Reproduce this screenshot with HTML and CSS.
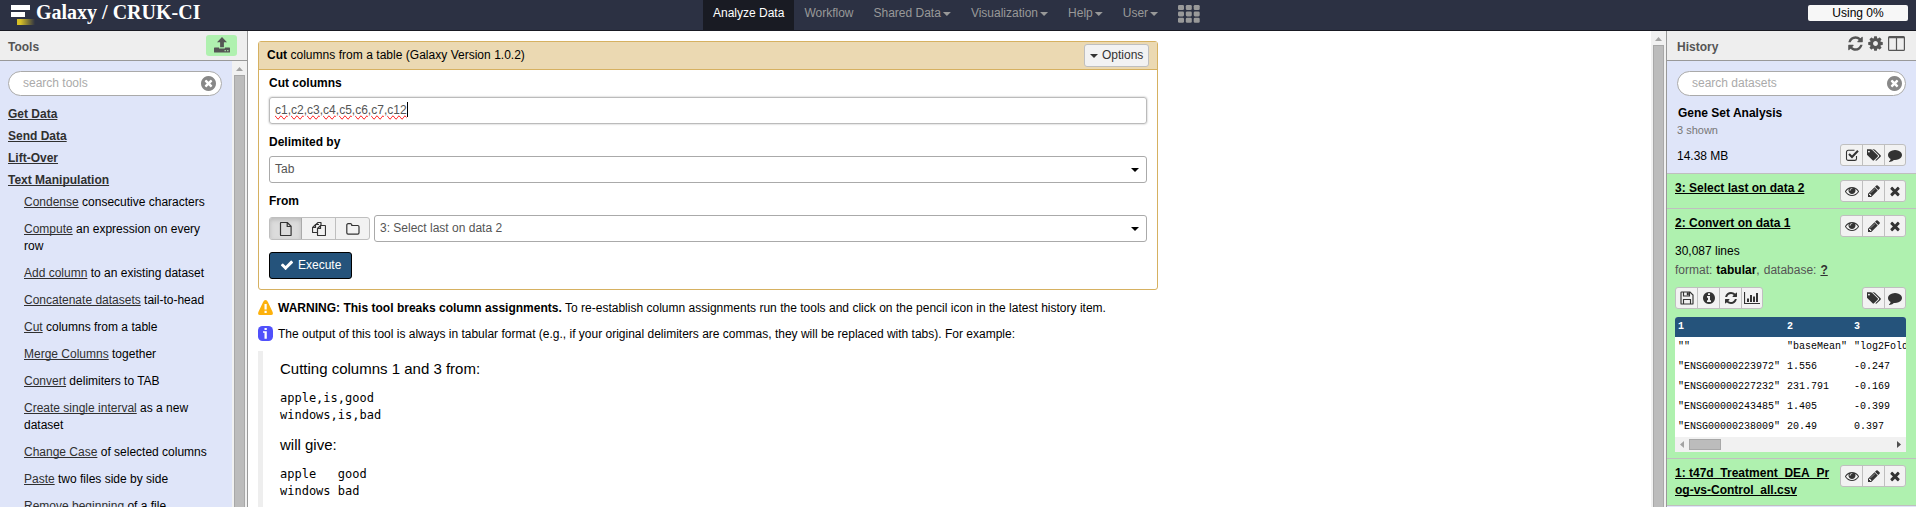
FILE: index.html
```html
<!DOCTYPE html>
<html lang="en">
<head>
<meta charset="utf-8">
<title>Galaxy / CRUK-CI</title>
<link rel="stylesheet" href="styles.css">
</head>
<body>
<svg class="sprite" aria-hidden="true">
  <symbol id="refresh" viewBox="0 0 1792 1792"><path d="M1639 1056q0 5-1 7-64 268-268 434.5t-478 166.5q-146 0-282.5-55t-243.5-157l-129 129q-19 19-45 19t-45-19-19-45v-448q0-26 19-45t45-19h448q26 0 45 19t19 45-19 45l-137 137q71 66 161 102t187 36q134 0 250-65t186-179q11-17 53-117 8-23 30-23h192q13 0 22.5 9.5t9.5 22.5zm25-800v448q0 26-19 45t-45 19h-448q-26 0-45-19t-19-45 19-45l138-138q-148-137-349-137-134 0-250 65t-186 179q-11 17-53 117-8 23-30 23h-199q-13 0-22.5-9.5t-9.5-22.5v-7q65-268 270-434.5t480-166.5q146 0 284 55.5t245 156.5l130-129q19-19 45-19t45 19 19 45z"/></symbol>
  <symbol id="cog" viewBox="0 0 1792 1792"><path d="M1152 896q0-106-75-181t-181-75-181 75-75 181 75 181 181 75 181-75 75-181zm512-109v222q0 12-8 23t-20 13l-185 28q-19 54-39 91 35 50 107 138 10 12 10 25t-9 23q-27 37-99 108t-94 71q-12 0-26-9l-138-108q-44 23-91 38-16 136-29 186-7 28-36 28h-222q-14 0-24.5-8.5t-11.5-21.5l-28-184q-49-16-90-37l-141 107q-10 9-25 9-14 0-25-11-126-114-165-168-7-10-7-23 0-12 8-23 15-21 51-66.5t54-70.5q-27-50-41-99l-183-27q-13-2-21-12.5t-8-23.5v-222q0-12 8-23t19-13l186-28q14-46 39-92-40-57-107-138-10-12-10-24 0-10 9-23 26-36 98.5-107.5t94.5-71.5q13 0 26 10l138 107q44-23 91-38 16-136 29-186 7-28 36-28h222q14 0 24.5 8.5t11.5 21.5l28 184q49 16 90 37l142-107q9-9 24-9 13 0 25 10 129 119 165 170 7 8 7 22 0 12-8 23-15 21-51 66.5t-54 70.5q26 50 41 98l183 28q13 2 21 12.5t8 23.5z"/></symbol>
  <symbol id="eye" viewBox="0 0 1792 1792"><path d="M1664 960q-152-236-381-353 61 104 61 225 0 185-131.5 316.5t-316.5 131.5-316.5-131.5-131.5-316.5q0-121 61-225-229 117-381 353 133 205 333.5 326.5t434.5 121.5 434.5-121.5 333.5-326.5zm-720-384q0-20-14-34t-34-14q-125 0-214.5 89.5t-89.5 214.5q0 20 14 34t34 14 34-14 14-34q0-86 61-147t147-61q20 0 34-14t14-34zm848 384q0 34-20 69-140 230-376.5 368.5t-499.5 138.5-499.5-139-376.5-368q-20-35-20-69t20-69q140-229 376.5-368t499.5-139 499.5 139 376.5 368q20 35 20 69z"/></symbol>
  <symbol id="pencil" viewBox="0 0 1792 1792"><path d="M491 1536l91-91-235-235-91 91v107h128v128h107zm523-928q0-22-22-22-10 0-17 7l-542 542q-7 7-7 17 0 22 22 22 10 0 17-7l542-542q7-7 7-17zm-54-192l416 416-832 832h-416v-416zm683 96q0 53-37 90l-166 166-416-416 166-165q36-38 90-38 53 0 91 38l235 234q37 39 37 91z"/></symbol>
  <symbol id="times" viewBox="0 0 1792 1792"><path d="M1490 1322q0 40-28 68l-136 136q-28 28-68 28t-68-28l-294-294-294 294q-28 28-68 28t-68-28l-136-136q-28-28-28-68t28-68l294-294-294-294q-28-28-28-68t28-68l136-136q28-28 68-28t68 28l294 294 294-294q28-28 68-28t68 28l136 136q28 28 28 68t-28 68l-294 294 294 294q28 28 28 68z"/></symbol>
  <symbol id="comment" viewBox="0 0 1792 1792"><path d="M1792 896q0 174-120 321.5t-326 233-450 85.5q-70 0-145-8-198 175-460 242-49 14-114 22-17 2-30.5-9t-17.5-29v-1q-3-4-.5-12t2-10 4.5-9.5l6-9 7-8.5 8-9q7-8 31-34.5t34.5-38 31-39.5 32.5-51 27-59 26-76q-157-89-247.5-220t-90.5-281q0-130 71-248.5t191-204.5 286-136.5 348-50.5q244 0 450 85.5t326 233 120 321.5z"/></symbol>
  <symbol id="tags" viewBox="0 0 1856 1792"><path d="M384 448q0-53-37.5-90.5t-90.5-37.5-90.5 37.5-37.5 90.5 37.5 90.5 90.5 37.5 90.5-37.5 37.5-90.5zm1067 576q0 53-37 90l-491 492q-39 37-91 37-53 0-90-37l-715-716q-38-37-64.5-101t-26.5-117v-416q0-52 38-90t90-38h416q53 0 117 26.5t102 64.5l715 714q37 39 37 91zm384 0q0 53-37 90l-491 492q-39 37-91 37-36 0-59-14t-53-45l470-470q37-37 37-90 0-52-37-91l-715-714q-38-38-102-64.5t-117-26.5h224q53 0 117 26.5t102 64.5l715 714q37 39 37 91z"/></symbol>
  <symbol id="checkbox" viewBox="0 0 14 14"><path fill="none" stroke="currentColor" stroke-width="1.100" d="M11.500 8v2.700a1.700 1.700 0 0 1-1.700 1.700H3.200a1.700 1.700 0 0 1-1.700-1.700V4a1.700 1.700 0 0 1 1.700-1.700H9.500"/><path fill="none" stroke="currentColor" stroke-width="2.100" d="M4 6l3 3 6-6.200"/></symbol>
  <symbol id="check" viewBox="0 0 1792 1792"><path d="M1671 566q0 40-28 68l-724 724-136 136q-28 28-68 28t-68-28l-136-136-362-362q-28-28-28-68t28-68l136-136q28-28 68-28t68 28l294 295 656-657q28-28 68-28t68 28l136 136q28 28 28 68z"/></symbol>
  <symbol id="clear" viewBox="128 128 1536 1536"><path d="M1277 1122q0-26-19-45l-181-181 181-181q19-19 19-45 0-27-19-46l-90-90q-19-19-46-19-26 0-45 19l-181 181-181-181q-19-19-45-19-27 0-46 19l-90 90q-19 19-19 46 0 26 19 45l181 181-181 181q-19 19-19 45 0 27 19 46l90 90q19 19 46 19 26 0 45-19l181-181 181 181q19 19 45 19 27 0 46-19l90-90q19-19 19-46zm387-226q0 209-103 385.5t-279.5 279.5-385.5 103-385.5-103-279.5-279.5-103-385.5 103-385.5 279.5-279.5 385.5-103 385.5 103 279.5 279.5 103 385.5z"/></symbol>
  <symbol id="info" viewBox="0 0 1792 1792"><path d="M1152 1376v-160q0-14-9-23t-23-9h-96v-512q0-14-9-23t-23-9h-320q-14 0-23 9t-9 23v160q0 14 9 23t23 9h96v320h-96q-14 0-23 9t-9 23v160q0 14 9 23t23 9h448q14 0 23-9t9-23zm-128-896v-160q0-14-9-23t-23-9h-192q-14 0-23 9t-9 23v160q0 14 9 23t23 9h192q14 0 23-9t9-23zm640 416q0 209-103 385.5t-279.5 279.5-385.5 103-385.5-103-279.5-279.5-103-385.5 103-385.5 279.5-279.5 385.5-103 385.5 103 279.5 279.5 103 385.5z"/></symbol>
  <symbol id="file" viewBox="0 0 14 14"><path fill="none" stroke="currentColor" stroke-width="1.200" d="M1.500 1.100a.6.6 0 0 1 .6-.6h6.200l3.800 3.800v8.600a.6.6 0 0 1-.6.6H2.100a.6.6 0 0 1-.6-.6zM8.200.6v3.900h3.900"/></symbol>
  <symbol id="files" viewBox="0 0 14 14"><path fill="none" stroke="currentColor" stroke-width="1.200" d="M5.500 10.500H1a.5.5 0 0 1-.5-.5V5.500l3-3H7M.5 5.500h3v-3M5.500 6.500l3-3H13a.5.5 0 0 1 .5.5v9a.5.5 0 0 1-.5.5H6a.5.5 0 0 1-.5-.5zM5.500 6.500h3v-3M4 2.500 6 .5h2.500a.5.5 0 0 1 .5.5v2.500"/></symbol>
  <symbol id="folder" viewBox="0 0 14 14"><path fill="none" stroke="currentColor" stroke-width="1.200" d="M.8 3a1.300 1.300 0 0 1 1.300-1.300h2.400A1.300 1.300 0 0 1 5.800 3v.5h5.900A1.300 1.300 0 0 1 13 4.800v6A1.300 1.300 0 0 1 11.700 12.100H2.100A1.300 1.300 0 0 1 .8 10.800z"/></symbol>
  <symbol id="floppy" viewBox="0 0 14 14"><path fill="none" stroke="currentColor" stroke-width="1.150" d="M1 1.600a.6.6 0 0 1 .6-.6H10l3 3v8.400a.6.6 0 0 1-.6.6H1.600a.6.6 0 0 1-.6-.6zM3.500 13V8.500h7V13M3.500 1v4h6V1"/><path d="M6.800 1.300h2v3h-2z"/></symbol>
  <symbol id="chart" viewBox="0 0 16 14"><path d="M0 1h1.100v10.900H16V13H0zM3 7.500h2V11H3zM6 4h2v7H6zM9 5.500h2V11H9zM12 2h2v9h-2z"/></symbol>
  <symbol id="upload" viewBox="0 0 16 16"><path fill-rule="evenodd" d="M8 0l5 5.200H9.900v5H6.100v-5H3zM.6 10.400h4.500v1.200h5.800v-1.200h4.500q.6 0 .6.600V15q0 .6-.6.6H.6Q0 15.600 0 15V11q0-.6.600-.6zM10.600 13v1.200h1.200V13zM13.200 13v1.200h1.200V13z"/></symbol>
  <symbol id="grid" viewBox="0 0 22 18"><g id="grid-row"><rect width="6" height="5" rx="1.300"/><rect x="7.800" width="6" height="5" rx="1.300"/><rect x="15.700" width="6" height="5" rx="1.300"/></g><use href="#grid-row" y="6.400"/><use href="#grid-row" y="12.800"/></symbol>
  <symbol id="columns" viewBox="0 0 17 15"><path fill-rule="evenodd" d="M1.500 0h14Q17 0 17 1.500v12q0 1.500-1.500 1.500h-14Q0 15 0 13.500v-12Q0 0 1.500 0zM1.200 2.200v11.600h6.700V2.200zM9.100 2.200v11.600h6.700V2.200z"/></symbol>
  <symbol id="warning" viewBox="0 0 15 15"><path fill="#fdb10b" d="M7.500 0Q9 0 10 2.200l4.500 9.500Q15.800 15 13 15H2Q-.8 15 .5 11.700L5 2.200Q6 0 7.500 0z"/><path fill="#fff" d="M6.500 4h2.200v5.500H6.500zM6.500 10.800h2.200v2.100H6.500z"/></symbol>
  <symbol id="note" viewBox="0 0 15 15"><rect width="15" height="15" rx="4.500" fill="#5050fb"/><path fill="#fff" d="M6.500 2h2.300v2H6.500zM5 5.200h3.800v7.600H6.500V6.700H5z"/></symbol>
</svg>

<header class="masthead">
  <div class="brand">
    <div class="logo"><i class="bar wide"></i><i class="bar"></i><i class="bar gold"></i></div>
    <span>Galaxy / CRUK-CI</span>
  </div>
  <nav class="nav">
    <a class="active">Analyze Data</a>
    <a>Workflow</a>
    <a>Shared Data<i class="caret"></i></a>
    <a>Visualization<i class="caret"></i></a>
    <a>Help<i class="caret"></i></a>
    <a>User<i class="caret"></i></a>
    <a class="apps"><svg><use href="#grid"/></svg></a>
  </nav>
  <div class="quota">Using 0%</div>
</header>

<div class="workspace">
  <aside class="panel tools">
    <div class="panel-head">Tools<button class="upload"><svg><use href="#upload"/></svg></button></div>
    <div class="panel-body">
      <div class="tool-list">
        <div class="search"><span>search tools</span><svg><use href="#clear"/></svg></div>
        <div class="sections">
          <a>Get Data</a><a>Send Data</a><a>Lift-Over</a><a>Text Manipulation</a>
        </div>
        <ul class="items">
          <li><a>Condense</a> consecutive characters</li>
          <li><a>Compute</a> an expression on every row</li>
          <li><a>Add column</a> to an existing dataset</li>
          <li><a>Concatenate datasets</a> tail-to-head</li>
          <li><a>Cut</a> columns from a table</li>
          <li><a>Merge Columns</a> together</li>
          <li><a>Convert</a> delimiters to TAB</li>
          <li><a>Create single interval</a> as a new dataset</li>
          <li><a>Change Case</a> of selected columns</li>
          <li><a>Paste</a> two files side by side</li>
          <li><a>Remove beginning</a> of a file</li>
        </ul>
      </div>
      <div class="scroll"><i class="up"></i><i class="thumb"></i></div>
    </div>
  </aside>

  <main class="center">
    <div class="content">
      <section class="form">
        <div class="form-head">
          <span><b>Cut</b> columns from a table (Galaxy Version 1.0.2)</span>
          <button class="options"><i class="caret"></i>Options</button>
        </div>
        <div class="form-body">
          <label>Cut columns</label>
          <div class="field focus"><span class="typed"><u>c1</u>,<u>c2</u>,<u>c3</u>,<u>c4</u>,<u>c5</u>,<u>c6</u>,<u>c7</u>,<u>c12</u></span></div>
          <label>Delimited by</label>
          <div class="field"><span>Tab</span><i class="caret"></i></div>
          <label>From</label>
          <div class="source">
            <div class="source-type">
              <button class="on"><svg><use href="#file"/></svg></button>
              <button class="mid"><svg><use href="#files"/></svg></button>
              <button><svg><use href="#folder"/></svg></button>
            </div>
            <div class="field"><span>3: Select last on data 2</span><i class="caret"></i></div>
          </div>
          <button class="execute"><svg><use href="#check"/></svg>Execute</button>
        </div>
      </section>
      <div class="help">
        <p><svg><use href="#warning"/></svg><span><b>WARNING: This tool breaks column assignments.</b> To re-establish column assignments run the tools and click on the pencil icon in the latest history item.</span></p>
        <p><svg><use href="#note"/></svg><span>The output of this tool is always in tabular format (e.g., if your original delimiters are commas, they will be replaced with tabs). For example:</span></p>
        <blockquote>
          <div>Cutting columns 1 and 3 from:</div>
<pre>apple,is,good
windows,is,bad</pre>
          <div>will give:</div>
<pre>apple   good
windows bad</pre>
        </blockquote>
      </div>
    </div>
    <div class="scroll"><i class="up"></i><i class="thumb"></i></div>
  </main>

  <aside class="panel history">
    <div class="panel-head">History
      <div class="head-icons"><svg><use href="#refresh"/></svg><svg><use href="#cog"/></svg><svg class="cols"><use href="#columns"/></svg></div>
    </div>
    <div class="summary">
      <div class="search"><span>search datasets</span><svg><use href="#clear"/></svg></div>
      <b class="name">Gene Set Analysis</b>
      <div class="shown">3 shown</div>
      <div class="size"><span>14.38 MB</span>
        <div class="group"><button><svg><use href="#checkbox"/></svg></button><button><svg><use href="#tags"/></svg></button><button><svg><use href="#comment"/></svg></button></div>
      </div>
    </div>
    <div class="dataset">
      <div class="row"><a>3: Select last on data 2</a>
        <div class="group"><button><svg><use href="#eye"/></svg></button><button><svg><use href="#pencil"/></svg></button><button><svg><use href="#times"/></svg></button></div></div>
    </div>
    <div class="dataset open">
      <div class="row"><a>2: Convert on data 1</a>
        <div class="group"><button><svg><use href="#eye"/></svg></button><button><svg><use href="#pencil"/></svg></button><button><svg><use href="#times"/></svg></button></div></div>
      <div class="lines">30,087 lines</div>
      <div class="meta"><span>format:</span><b>tabular</b><span class="comma">,</span><span>database:</span><b class="db">?</b></div>
      <div class="actions">
        <div class="group"><button><svg><use href="#floppy"/></svg></button><button><svg><use href="#info"/></svg></button><button><svg><use href="#refresh"/></svg></button><button><svg class="chart"><use href="#chart"/></svg></button></div>
        <div class="group"><button><svg><use href="#tags"/></svg></button><button><svg><use href="#comment"/></svg></button></div>
      </div>
      <div class="peek">
        <table>
          <tr><th>1</th><th>2</th><th>3</th></tr>
          <tr><td>""</td><td>"baseMean"</td><td>"log2FoldChange"</td></tr>
          <tr><td>"ENSG00000223972"</td><td>1.556</td><td>-0.247</td></tr>
          <tr><td>"ENSG00000227232"</td><td>231.791</td><td>-0.169</td></tr>
          <tr><td>"ENSG00000243485"</td><td>1.405</td><td>-0.399</td></tr>
          <tr><td>"ENSG00000238009"</td><td>20.49</td><td>0.397</td></tr>
        </table>
        <div class="hscroll"><i class="left"></i><i class="hthumb"></i><i class="right"></i></div>
      </div>
    </div>
    <div class="dataset last">
      <div class="row"><a>1: t47d_Treatment_DEA_Pr<br>og-vs-Control_all.csv</a>
        <div class="group"><button><svg><use href="#eye"/></svg></button><button><svg><use href="#pencil"/></svg></button><button><svg><use href="#times"/></svg></button></div></div>
    </div>
  </aside>
</div>
</body>
</html>
```
FILE: styles.css
```css
* { box-sizing: border-box; }
html, body { height: 100%; }
body {
  margin: 0;
  height: 507px;
  overflow: hidden;
  display: flex;
  flex-direction: column;
  background: #fff;
  color: #000;
  font: 12px/17px "Liberation Sans", Arial, sans-serif;
}
.sprite { display: none; }
svg { fill: currentColor; flex: none; display: block; overflow: visible; }
button { font: inherit; padding: 0; margin: 0; }
.caret {
  flex: none;
  width: 8px; height: 4px;
  background: currentColor;
  clip-path: polygon(0 0, 100% 0, 50% 100%);
}

/* masthead */
.masthead {
  flex: none;
  height: 31px;
  display: grid;
  grid-template-columns: 703px 1fr auto;
  background: #2c3143;
  border-bottom: 1px solid #191a23;
}
.brand {
  display: flex;
  gap: 1px;
  padding-left: 11px;
  color: #fff;
  font: bold 20px/20px "Liberation Serif", "Times New Roman", serif;
}
.brand span { padding-top: 2px; }
.logo { width: 24px; padding-top: 5px; display: flex; flex-direction: column; gap: 2px; }
.bar { flex: none; width: 14px; height: 5px; background: #fff; }
.bar.wide { width: 19px; }
.bar.gold { width: 18px; height: 6px; margin-left: 6px; background: linear-gradient(90deg, #d6bf27 20%, #2c3143); }
.nav { display: flex; height: 30px; color: #999; line-height: 26px; }
.nav a { display: flex; padding: 0 10px; white-space: nowrap; }
.nav .active { background: #191b23; color: #fff; }
.nav .caret { margin: 12px 0 0 2px; }
.nav .apps { padding-top: 5px; }
.apps svg { width: 22px; height: 18px; }
.quota {
  width: 100px; height: 16px;
  margin: 5px 8px 0 0;
  border-radius: 2px;
  background: #f7f7f7;
  line-height: 16px;
  text-align: center;
}

/* frame */
.workspace { flex: 1; min-height: 0; display: grid; grid-template-columns: 248px 1fr 250px; }
.panel { background: #dfe5f9; min-height: 0; overflow: hidden; display: flex; flex-direction: column; }
.tools { border-right: 1px solid #999; }
.history { border-left: 1px solid #999; }
.panel-head {
  flex: none;
  height: 30px;
  display: flex;
  justify-content: space-between;
  padding: 4px 10px 0 8px;
  background: #eee;
  border-bottom: 1px solid #999;
  color: #555;
  font-weight: bold;
  line-height: 24px;
}
.upload { width: 31px; height: 21px; border: 0; border-radius: 3px; background: #aff1af; color: #555; display: flex; justify-content: center; padding-top: 2px; }
.upload svg { width: 16px; height: 16px; }
.panel-body { flex: 1; min-height: 0; display: flex; }
.tool-list { flex: 1; min-width: 0; overflow: hidden; padding: 10px 10px 0 8px; }
.search {
  height: 25px;
  display: flex;
  justify-content: space-between;
  align-items: center;
  padding: 0 5px 0 14px;
  border: 1px solid #aaa;
  border-radius: 13px;
  background: #fff;
  color: #aaa;
}
.search svg { width: 15px; height: 15px; color: #888; }
.search span { padding-bottom: 1px; }
.sections { display: flex; flex-direction: column; gap: 5px; padding-top: 10px; }
.sections a { font-weight: bold; text-decoration: underline; color: #303030; }
.items { list-style: none; margin: 5px 0 0; padding: 0 0 0 16px; width: 205px; }
.items li { margin-bottom: 10px; }
.items a { text-decoration: underline; color: #303030; }
.sections a, .items a { text-decoration-skip-ink: none; }
.scroll { flex: none; width: 15px; background: #f1f1f1; display: flex; flex-direction: column; align-items: center; }
.up { flex: none; width: 7px; height: 4px; margin: 6px 0 4px; background: #a3a3a3; clip-path: polygon(0 100%, 100% 100%, 50% 0); }
.thumb { flex: 1; width: 11px; background: #bcbcbc; border: 1px solid #a8a8a8; border-bottom: 0; }

/* tool form */
.center { display: flex; min-width: 0; min-height: 0; overflow: hidden; }
.center .content { flex: 1; padding: 10px; min-width: 0; }
.form { width: 900px; height: 249px; border: 1px solid #d6b161; border-radius: 3px; }
.form-head {
  display: flex;
  justify-content: space-between;
  height: 28px;
  padding: 2px 8px 0 8px;
  background: #ebd9b2;
  border-bottom: 1px solid #d6b161;
  line-height: 22px;
}
.form-head span { word-spacing: 0.15px; }
.options { width: 65px; height: 23px; border: 1px solid #bfbfbf; border-radius: 3px; background: #f2f2f2; color: #333; display: flex; gap: 4px; padding-left: 5px; line-height: 20px; }
.options .caret { margin-top: 9px; }
.form-body { padding: 5px 10px 0; }
.form-body label { display: block; height: 22px; font-weight: bold; }
.field {
  flex: 1;
  height: 27px;
  margin-bottom: 10px;
  display: flex;
  justify-content: space-between;
  padding: 0 7px 0 5px;
  border: 1px solid #aaa;
  border-radius: 3px;
  color: #555;
  line-height: 24px;
}
.field .caret { color: #000; margin-top: 11px; }
.focus { border-color: #bbb; box-shadow: 0 0 2px #aaa; }
.typed { height: 15px; margin-top: 4px; line-height: 16px; border-right: 1px solid #000; }
.typed u { text-decoration: spelling-error; }
.source { display: flex; gap: 4px; }
.source-type { display: flex; height: 23px; margin-top: 2px; border: 1px solid #bfbfbf; border-radius: 3px; background: #f2f2f2; overflow: hidden; }
.source-type button { width: 33px; border: 0; background: none; color: #333; display: flex; justify-content: center; align-items: center; }
.source-type .mid { width: 34px; border: solid #bfbfbf; border-width: 0 1px 0 0; }
.source-type .on { width: 32px; background: #dcdcdc; box-shadow: inset 0 2px 4px #bbb; border-right: 1px solid #aaa; }
.source-type svg { width: 14px; height: 14px; }
.execute { width: 83px; height: 27px; border: 1px solid #000; border-radius: 3px; background: #25537b; color: #fff; display: flex; gap: 4px; padding: 0 0 0 10px; line-height: 24px; }
.execute svg { width: 14px; height: 14px; margin-top: 5px; }

/* help */
.help { padding-top: 10px; }
.help p { display: flex; gap: 5px; margin: 0 0 9px; line-height: 17px; white-space: nowrap; }
.help p:first-child { word-spacing: 0.08px; }
.help p:nth-child(2) { margin-bottom: 8px; }
.help p svg { width: 15px; height: 15px; }
blockquote { margin: 0; height: 200px; padding: 8px 17px; border-left: 5px solid #eee; font-size: 15px; line-height: 19px; }
pre { margin: 12px 0 11px; font: 12px/17px "DejaVu Sans Mono", monospace; }

/* history */
.history .panel-head { padding-left: 10px; }
.head-icons { display: flex; gap: 3px; color: #555; }
.head-icons svg { width: 17px; height: 17px; }
.head-icons .cols { height: 15px; margin: 1px 1px 0 1px; }
.summary { flex: none; height: 113px; padding: 10px 10px 0; border-bottom: 1px solid #bfbfbf; }
.history .search { width: 229px; padding-right: 3px; }
.name { display: block; padding: 9px 0 0 1px; }
.shown { font-size: 11px; color: #777; line-height: 17px; }
.size { display: flex; justify-content: space-between; padding-top: 5px; line-height: 24px; }
.group { flex: none; display: flex; height: 22px; border: 1px solid #bfbfbf; border-radius: 3px; background: #f2f2f2; color: #333; }
.group button { width: 22px; border: 0; border-left: 1px solid #bfbfbf; background: none; color: inherit; display: flex; justify-content: center; align-items: center; }
.group button:first-child { width: 21px; border-left: 0; }
.group button:last-child { width: 21px; }
.group svg { width: 14px; height: 14px; }
.group .chart { width: 16px; }
.dataset { flex: none; height: 35px; padding: 6px 10px 0 8px; background: #aff1af; border-bottom: 1px solid #bfbfbf; }
.row { display: flex; justify-content: space-between; }
.row a { font-weight: bold; text-decoration: underline; text-decoration-skip-ink: none; }
.dataset.open { height: 250px; }
.lines { padding-top: 6px; }
.meta { display: flex; color: #555; padding-top: 2px; gap: 4px; }
.meta b { color: #000; }
.meta .comma { margin-left: -4px; }
.meta .db { text-decoration: underline; color: #303030; }
.actions { display: flex; justify-content: space-between; padding-top: 8px; }
.peek { margin-top: 8px; height: 135px; overflow: hidden; background: #fff; border-radius: 3px 3px 0 0; }
table { width: 320px; table-layout: fixed; border-collapse: collapse; font: 10px/12px "Liberation Mono", "Courier New", monospace; }
th, td { height: 20px; padding: 0 0 1px 3px; text-align: left; width: 109px; }
th + th, td + td { width: 67px; padding-left: 3px; }
th:last-child, td:last-child { width: auto; }
th { background: #25537b; color: #fff; }
td { white-space: nowrap; }
.hscroll { height: 15px; background: #f1f1f1; display: flex; align-items: center; padding: 0 5px; }
.left { width: 4px; height: 7px; background: #a3a3a3; clip-path: polygon(100% 0, 100% 100%, 0 50%); }
.hthumb { width: 32px; height: 11px; margin-left: 5px; background: #bcbcbc; border: 1px solid #a8a8a8; }
.right { width: 4px; height: 7px; margin-left: auto; background: #505050; clip-path: polygon(0 0, 0 100%, 100% 50%); }
.dataset.last { height: 47px; }
```
